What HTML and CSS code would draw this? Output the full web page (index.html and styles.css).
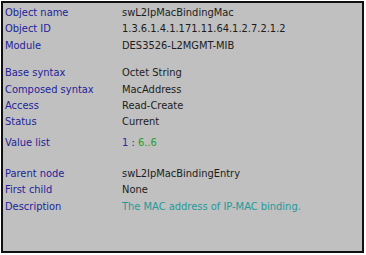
FILE: index.html
```html
<!DOCTYPE html>
<html lang="en">
<head>
  <meta charset="UTF-8">
  <title>MIB Object</title>
  <link rel="stylesheet" href="styles.css">
</head>
<body>
  <div class="panel">
    <div class="group">
      <div class="row"><span class="label">Object name</span><span class="value">swL2IpMacBindingMac</span></div>
      <div class="row"><span class="label">Object ID</span><span class="value">1.3.6.1.4.1.171.11.64.1.2.7.2.1.2</span></div>
      <div class="row"><span class="label">Module</span><span class="value">DES3526-L2MGMT-MIB</span></div>
    </div>
    <div class="group syntax">
      <div class="row"><span class="label">Base syntax</span><span class="value">Octet String</span></div>
      <div class="row"><span class="label">Composed syntax</span><span class="value">MacAddress</span></div>
      <div class="row"><span class="label">Access</span><span class="value">Read-Create</span></div>
      <div class="row"><span class="label">Status</span><span class="value">Current</span></div>
      <div class="row tall"><span class="label">Value list</span><span class="value"><span class="num">1</span> <span class="num">:</span> <span class="range">6..6</span></span></div>
    </div>
    <div class="group">
      <div class="row"><span class="label">Parent node</span><span class="value">swL2IpMacBindingEntry</span></div>
      <div class="row"><span class="label">First child</span><span class="value">None</span></div>
      <div class="row"><span class="label">Description</span><span class="value desc">The MAC address of IP-MAC binding.</span></div>
    </div>
  </div>
</body>
</html>
```

FILE: styles.css
```css
body {
  margin: 0;
  padding: 1px;
  background: #fff;
  font-family: "DejaVu Sans Condensed", "DejaVu Sans", sans-serif;
  font-stretch: condensed;
  font-size: 11px;
}
.panel {
  width: 357px;
  height: 246px;
  background: #c0c0c0;
  border: 2px solid #101010;
  padding: 2px 0 0 2px;
}
.group {
  margin-bottom: 11px;
}
.group.syntax {
  margin-bottom: 15px;
}
.row {
  display: flex;
  height: 16.4px;
  line-height: 16px;
}
.row.tall {
  height: 20px;
  line-height: 24px;
}
.label {
  width: 117px;
  color: #23239a;
}
.value {
  color: #1c1c1c;
}
.num {
  color: #2a2aa8;
}
.range {
  color: #22a022;
}
.desc {
  color: #1f9a9a;
}
```
